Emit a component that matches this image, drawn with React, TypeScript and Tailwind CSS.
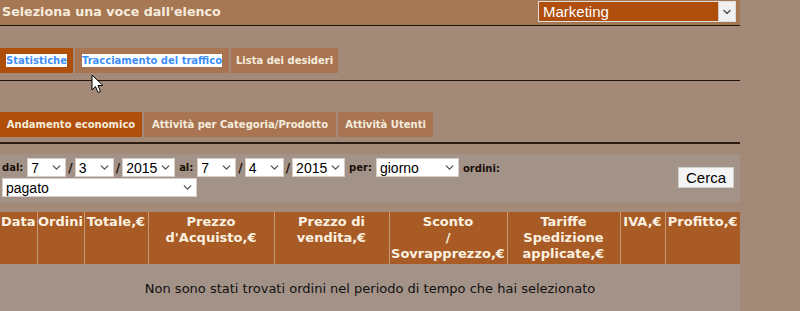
import { ChevronDown } from 'lucide-react';

interface FakeSelectProps {
  value: string;
  width: string;
}

const FakeSelect: React.FC<FakeSelectProps> = ({ value, width }) => {
  return (
    <div
      className={`${width} h-[19px] bg-white border border-[#d8d0c8] flex items-center justify-between pl-[3px] pr-[2px] font-['Liberation_Sans'] text-[14px] font-normal leading-none text-black`}
    >
      <span>{value}</span>
      <ChevronDown className="w-[13px] h-[13px] text-[#555]" strokeWidth={2.5} />
    </div>
  );
};

const Cursor = () => (
  <svg
    className="absolute left-[91px] top-[74px]"
    width="13"
    height="20"
    viewBox="0 0 13 20"
  >
    <path
      d="M1 1 L1 16 L4.5 12.5 L7 18.5 L9.5 17.5 L7 11.5 L12 11.5 Z"
      fill="white"
      stroke="black"
      strokeWidth="1"
      strokeLinejoin="miter"
    />
  </svg>
);

const headers = [
  { label: ['Data'], w: 'w-[37px]' },
  { label: ['Ordini'], w: 'w-[47px]' },
  { label: ['Totale,€'], w: 'w-[64px]' },
  { label: ['Prezzo', "d'Acquisto,€"], w: 'w-[126px]' },
  { label: ['Prezzo di', 'vendita,€'], w: 'w-[115px]' },
  { label: ['Sconto', '/', 'Sovrapprezzo,€'], w: 'w-[118px]' },
  { label: ['Tariffe', 'Spedizione', 'applicate,€'], w: 'w-[113px]' },
  { label: ['IVA,€'], w: 'w-[45px]' },
  { label: ['Profitto,€'], w: 'w-[75px]' },
];

const App = () => {
  return (
    <div className="relative min-h-screen bg-[#a38a78] font-['DejaVu_Sans',sans-serif]">
      <div className="w-[740px]">
        {/* header */}
        <div className="h-[26px] bg-[#a67753] border-b border-[#1c120a] flex justify-between items-start">
          <h1 className="pl-[2px] pt-[4px] text-[12.7px] font-bold text-[#f6ecdc] leading-[16px]">
            Seleziona una voce dall'elenco
          </h1>
          <div className="mt-[1px] mr-[4px] w-[198px] h-[21px] border border-[#ddd] bg-[#b04e0b] flex items-center justify-between">
            <span className="pl-[4px] font-['Liberation_Sans'] text-[15px] text-white leading-none">
              Marketing
            </span>
            <div className="w-[17px] h-[19px] bg-[#f0f0f0] border-l border-[#ccc] flex items-center justify-center">
              <ChevronDown className="w-[12px] h-[12px] text-[#555]" strokeWidth={3} />
            </div>
          </div>
        </div>

        {/* first tabs */}
        <div className="mt-[22px] pb-[7px] border-b border-[#1c120a] flex gap-[2px] text-[10px] font-bold whitespace-nowrap">
          <div className="h-[25px] w-[73px] bg-[#b04e0b] flex items-center justify-center">
            <span className="bg-white text-[#3d8ef8] leading-[13px]">Statistiche</span>
          </div>
          <div className="h-[25px] w-[154px] bg-[#a87452] flex items-center justify-center">
            <span className="bg-white text-[#3d8ef8] leading-[13px]">Tracciamento del traffico</span>
          </div>
          <div className="h-[25px] w-[107px] bg-[#a87452] flex items-center justify-center text-[#f6ecdc]">
            Lista dei desideri
          </div>
        </div>

        {/* second tabs */}
        <div className="mt-[31px] pb-[5px] border-b-2 border-[#2a1a10] flex gap-[2px] text-[10px] font-bold text-[#f6ecdc] whitespace-nowrap">
          <div className="h-[25px] w-[142px] bg-[#b04e0b] flex items-center justify-center">
            Andamento economico
          </div>
          <div className="h-[25px] w-[192px] bg-[#a87452] flex items-center justify-center">
            Attività per Categoria/Prodotto
          </div>
          <div className="h-[25px] w-[95px] bg-[#a87452] flex items-center justify-center">
            Attività Utenti
          </div>
        </div>

        {/* filters */}
        <div className="mt-[10px] h-[48px] bg-[#a39287] flex justify-between pl-[2px] pr-[6px] pt-[4px] text-[10px] font-bold text-[#1a1008]">
          <div className="flex flex-col gap-[1px]">
            <div className="flex items-center gap-[2px]">
              <span className="mr-[2px]">dal:</span>
              <FakeSelect value="7" width="w-[39px]" />
              <span className="text-[12px]">/</span>
              <FakeSelect value="3" width="w-[39px]" />
              <span className="text-[12px]">/</span>
              <FakeSelect value="2015" width="w-[53px]" />
              <span className="mx-[2px]">al:</span>
              <FakeSelect value="7" width="w-[39px]" />
              <span className="text-[12px]">/</span>
              <FakeSelect value="4" width="w-[39px]" />
              <span className="text-[12px]">/</span>
              <FakeSelect value="2015" width="w-[53px]" />
              <span className="mx-[2px]">per:</span>
              <FakeSelect value="giorno" width="w-[83px]" />
              <span className="self-start pt-[3px] ml-[2px]">ordini:</span>
            </div>
            <FakeSelect value="pagato" width="w-[195px]" />
          </div>
          <button className="mt-[9px] h-[21px] w-[56px] bg-[#f4f4f4] border border-[#d0d0d0] font-['Liberation_Sans'] text-[15px] font-normal text-black leading-none">
            Cerca
          </button>
        </div>

        {/* table */}
        <table className="mt-[10px] w-[740px] table-fixed border-collapse">
          <thead>
            <tr className="bg-[#a85b25]">
              {headers.map((h) => (
                <th
                  key={h.label.join(' ')}
                  className={`${h.w} h-[52px] align-top border-x border-[#c49a78] first:border-l-0 last:border-r-0 text-[13px] font-bold text-[#fbf1e0] leading-[16px] pt-[2px]`}
                >
                  {h.label.map((l) => (
                    <div key={l}>{l}</div>
                  ))}
                </th>
              ))}
            </tr>
          </thead>
          <tbody>
            <tr className="bg-[#a39287]">
              <td colSpan={9} className="h-[58px] text-center text-[13px] text-[#111] pb-[8px]">
                Non sono stati trovati ordini nel periodo di tempo che hai selezionato
              </td>
            </tr>
          </tbody>
        </table>
      </div>
      <Cursor />
    </div>
  );
};

export default App;
